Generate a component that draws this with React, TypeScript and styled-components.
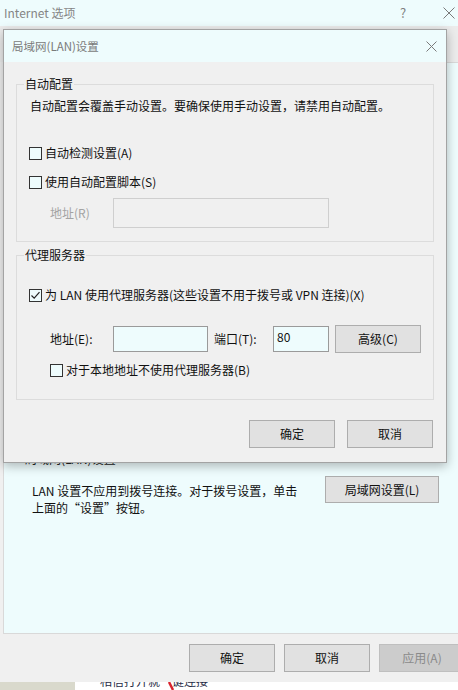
import React from "react";
import styled, { createGlobalStyle } from "styled-components";

const cyan = "#eefcfd";
const face = "#f0f0f0";

const GlobalStyle = createGlobalStyle`
	html, body {
		margin: 0;
		padding: 0;
		overflow: hidden;
	}

	body {
		font-family: "Noto Sans CJK SC", "Microsoft YaHei", sans-serif;
		font-size: 12px;
		color: #000;
	}
`;

const Desktop = styled("div")`
	position: relative;
	width: 458px;
	height: 690px;
	overflow: hidden;
	background: #fff;
`;

/* ---------- outer "Internet 选项" window ---------- */

const OuterWindow = styled("div")`
	width: 472px;
	height: 682px;
	display: flex;
	flex-direction: column;
	background: ${face};
	box-shadow: 0 1px 5px rgba(0, 0, 0, 0.35);
`;

const OuterTitleBar = styled("div")`
	height: 26px;
	flex: none;
	display: flex;
	align-items: center;
	padding-left: 4px;
	background: ${cyan};
	color: #858585;
	font-size: 12px;
	line-height: 14px;
`;

const TitleControl = styled("div")<{ $first?: boolean }>`
	width: 46px;
	height: 26px;
	display: flex;
	align-items: center;
	justify-content: center;
	margin-left: ${({ $first }) => ($first ? "auto" : "0")};
	color: #808080;
	font-size: 13px;
`;

const TabStrip = styled("div")`
	height: 36px;
	flex: none;
	background: #ececec;
`;

const TabPanel = styled("div")`
	height: 572px;
	flex: none;
	box-sizing: border-box;
	margin-left: 3px;
	padding-top: 389px;
	border: 1px solid #d9d9d9;
	border-right: none;
	background: ${cyan};
`;

const SectionLabel = styled("div")`
	padding-left: 21px;
	line-height: 14px;
	color: #222;
`;

const SectionRow = styled("div")`
	display: flex;
	align-items: flex-start;
	margin-top: 10px;
	padding-left: 28px;
`;

const SectionText = styled("div")`
	width: 293px;
	margin-top: 6px;
	line-height: 17px;
	color: #111;
`;

const OuterFooter = styled("div")`
	display: flex;
	justify-content: flex-end;
	gap: 9px;
	padding: 10px 7px 0 0;
`;

const BelowStrip = styled("div")`
	height: 8px;
	display: flex;
	overflow: hidden;
`;

const BelowSide = styled("div")`
	width: 75px;
	background: #d9d9cc;
`;

const BelowContent = styled("div")`
	position: relative;
	flex: 1;
	padding-left: 25px;
	overflow: hidden;
	background: #fff;
`;

const BelowText = styled("div")`
	margin-top: -8px;
	line-height: 14px;
	color: #1f2a44;
`;

const RedMark = styled("svg")`
	position: absolute;
	left: 93px;
	top: 0;
`;

/* ---------- shared controls ---------- */

const Button = styled("button")<{ $w: number; $h: number; $disabled?: boolean }>`
	width: ${({ $w }) => $w}px;
	height: ${({ $h }) => $h}px;
	flex: none;
	box-sizing: border-box;
	padding: 0;
	border: 1px solid ${({ $disabled }) => ($disabled ? "#bfbfbf" : "#adadad")};
	background: ${({ $disabled }) => ($disabled ? "#cccccc" : "#e1e1e1")};
	color: ${({ $disabled }) => ($disabled ? "#8a8a8a" : "#111")};
	font-family: inherit;
	font-size: 12px;
	line-height: 14px;
`;

const CheckRow = styled("label")<{ $top: number; $indent?: number }>`
	display: flex;
	align-items: center;
	gap: 3px;
	height: 16px;
	margin-top: ${({ $top }) => $top}px;
	margin-left: ${({ $indent }) => $indent ?? 0}px;
	line-height: 16px;
	color: #111;
`;

const Box = styled("span")`
	width: 13px;
	height: 13px;
	flex: none;
	box-sizing: border-box;
	display: flex;
	align-items: center;
	justify-content: center;
	border: 1px solid #333;
	background: ${cyan};
`;

const TextInput = styled("div")<{ $w: number; $h: number; $disabled?: boolean }>`
	width: ${({ $w }) => $w}px;
	height: ${({ $h }) => $h}px;
	flex: none;
	box-sizing: border-box;
	padding: 3px 0 0 3px;
	border: 1px solid ${({ $disabled }) => ($disabled ? "#cfcfcf" : "#9a9a9a")};
	background: ${({ $disabled }) => ($disabled ? face : cyan)};
	line-height: 14px;
	color: #111;
`;

const FieldLabel = styled("span")<{ $w: number; $gap?: number; $muted?: boolean }>`
	width: ${({ $w }) => $w}px;
	flex: none;
	margin-left: ${({ $gap }) => $gap ?? 0}px;
	color: ${({ $muted }) => ($muted ? "#a3a3a3" : "#111")};
	line-height: 14px;
`;

/* ---------- LAN settings dialog ---------- */

const Dialog = styled("div")`
	position: absolute;
	left: 3px;
	top: 29px;
	width: 444px;
	height: 434px;
	box-sizing: border-box;
	display: flex;
	flex-direction: column;
	border: 1px solid #a3a3a3;
	background: ${face};
	box-shadow: 0 3px 10px rgba(0, 0, 0, 0.28);
`;

const DialogTitle = styled("div")`
	height: 32px;
	flex: none;
	display: flex;
	align-items: center;
	padding-left: 8px;
	background: ${cyan};
	color: #7a7a7a;
	font-size: 11.5px;
	line-height: 14px;
`;

const CloseBox = styled("div")`
	width: 30px;
	height: 32px;
	margin-left: auto;
	display: flex;
	align-items: center;
	justify-content: center;
`;

const DialogBody = styled("div")`
	display: flex;
	flex-direction: column;
	padding: 15px 12px 0 12px;
`;

const Group = styled("fieldset")<{ $top?: number }>`
	margin: ${({ $top }) => $top ?? 0}px 0 0 0;
	padding: 0;
	min-width: 0;
	border: 1px solid #dcdcdc;
`;

const Legend = styled("legend")`
	margin-left: 7px;
	padding: 0 1px;
	line-height: 14px;
	color: #111;
`;

const GroupContent = styled("div")<{ $top: number; $bottom: number }>`
	display: flex;
	flex-direction: column;
	padding: ${({ $top, $bottom }) => `${$top}px 12px ${$bottom}px 12px`};
`;

const Description = styled("div")`
	margin-left: 1px;
	line-height: 16px;
	color: #111;
`;

const FieldRow = styled("div")<{ $top: number }>`
	display: flex;
	align-items: center;
	margin: ${({ $top }) => $top}px 0 0 21px;
`;

const DialogFooter = styled("div")`
	display: flex;
	justify-content: flex-end;
	gap: 12px;
	margin-top: 20px;
	padding-right: 1px;
`;

const CheckMark = () => (
	<svg width="11" height="11" viewBox="0 0 11 11">
		<polyline points="1.5,5.5 4.2,8.2 9.5,2.2" fill="none" stroke="#222" strokeWidth="1.2" />
	</svg>
);

const Cross = ({ size, color }: { size: number; color: string }) => (
	<svg width={size} height={size} viewBox={`0 0 ${size} ${size}`}>
		<line x1="0.5" y1="0.5" x2={size - 0.5} y2={size - 0.5} stroke={color} strokeWidth="1" />
		<line x1={size - 0.5} y1="0.5" x2="0.5" y2={size - 0.5} stroke={color} strokeWidth="1" />
	</svg>
);

const Check = ({ checked, children, top, indent }: { checked?: boolean; children: React.ReactNode; top: number; indent?: number }) => (
	<CheckRow $top={top} $indent={indent}>
		<Box>{checked && <CheckMark />}</Box>
		<span>{children}</span>
	</CheckRow>
);

const LanDialog = () => (
	<Dialog>
		<DialogTitle>
			局域网(LAN)设置
			<CloseBox>
				<Cross size={11} color="#7a7a7a" />
			</CloseBox>
		</DialogTitle>

		<DialogBody>
			<Group>
				<Legend>自动配置</Legend>
				<GroupContent $top={7} $bottom={13}>
					<Description>自动配置会覆盖手动设置。要确保使用手动设置，请禁用自动配置。</Description>
					<Check top={31}>自动检测设置(A)</Check>
					<Check top={13}>使用自动配置脚本(S)</Check>
					<FieldRow $top={8}>
						<FieldLabel $w={63} $muted>
							地址(R)
						</FieldLabel>
						<TextInput $w={216} $h={30} $disabled />
					</FieldRow>
				</GroupContent>
			</Group>

			<Group $top={6}>
				<Legend>代理服务器</Legend>
				<GroupContent $top={25} $bottom={21}>
					<Check checked top={0}>
						为 LAN 使用代理服务器(这些设置不用于拨号或 VPN 连接)(X)
					</Check>
					<FieldRow $top={22}>
						<FieldLabel $w={63}>地址(E):</FieldLabel>
						<TextInput $w={95} $h={26} />
						<FieldLabel $w={59} $gap={6}>
							端口(T):
						</FieldLabel>
						<TextInput $w={56} $h={26}>
							80
						</TextInput>
						<Button $w={86} $h={28} style={{ marginLeft: 6 }}>
							高级(C)
						</Button>
					</FieldRow>
					<Check top={9} indent={21}>
						对于本地地址不使用代理服务器(B)
					</Check>
				</GroupContent>
			</Group>

			<DialogFooter>
				<Button $w={86} $h={28}>
					确定
				</Button>
				<Button $w={86} $h={28}>
					取消
				</Button>
			</DialogFooter>
		</DialogBody>
	</Dialog>
);

export default function App() {
	return (
		<>
			<GlobalStyle />
			<Desktop>
				<OuterWindow>
					<OuterTitleBar>
						Internet 选项
						<TitleControl $first>?</TitleControl>
						<TitleControl>
							<Cross size={12} color="#7a7a7a" />
						</TitleControl>
					</OuterTitleBar>

					<TabStrip />

					<TabPanel>
						<SectionLabel>局域网(LAN)设置</SectionLabel>
						<SectionRow>
							<SectionText>
								LAN 设置不应用到拨号连接。对于拨号设置，单击
								<br />
								上面的“设置”按钮。
							</SectionText>
							<Button $w={114} $h={27}>
								局域网设置(L)
							</Button>
						</SectionRow>
					</TabPanel>

					<OuterFooter>
						<Button $w={86} $h={28}>
							确定
						</Button>
						<Button $w={86} $h={28}>
							取消
						</Button>
						<Button $w={86} $h={28} $disabled>
							应用(A)
						</Button>
					</OuterFooter>
				</OuterWindow>

				<BelowStrip>
					<BelowSide />
					<BelowContent>
						<BelowText>相信打开就一键连接</BelowText>
						<RedMark width="10" height="8" viewBox="0 0 10 8">
							<line x1="1" y1="0" x2="5" y2="8" stroke="#d9232e" strokeWidth="2.5" />
						</RedMark>
					</BelowContent>
				</BelowStrip>

				<LanDialog />
			</Desktop>
		</>
	);
}
